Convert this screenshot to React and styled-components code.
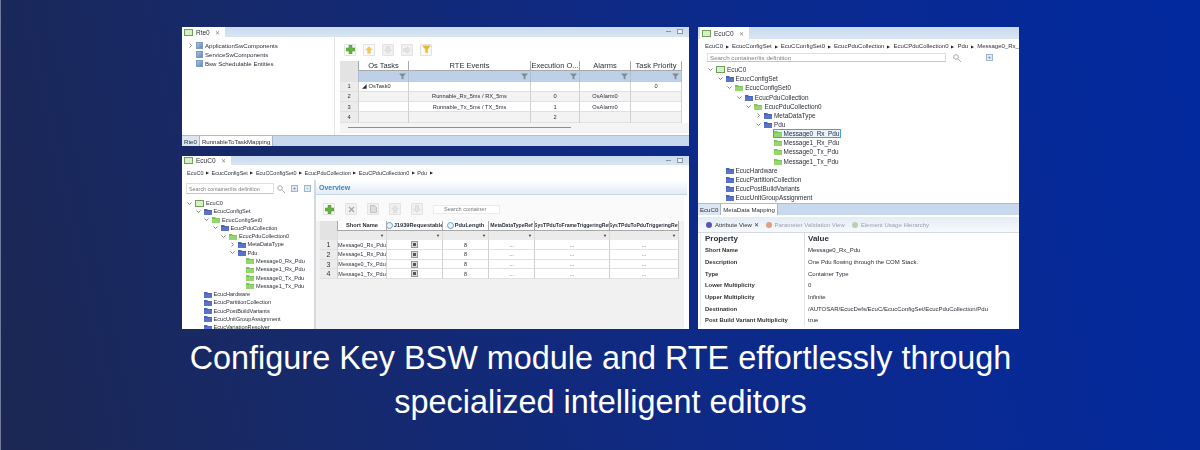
import React from 'react';
import styled, { createGlobalStyle } from 'styled-components';

const GlobalStyle = createGlobalStyle`
  html, body {
    margin: 0;
    padding: 0;
    width: 1200px;
    height: 450px;
    overflow: hidden;
  }
`;

const Page = styled.div`
  width: 1200px;
  height: 450px;
  box-sizing: border-box;
  padding: 27px 181px 0 182px;
  background: linear-gradient(78deg, #1c2752 0%, #172968 22%, #0c2a8c 62%, #02299f 100%);
  box-shadow: inset 1px 0 0 #6f7a9c;
  font-family: 'Liberation Sans', Arial, sans-serif;
`;

const Shots = styled.div`
  display: flex;
  gap: 9px;
  height: 302px;
  color: #2a2f3a;
  font-size: 6.1px;
  filter: blur(0.4px);
`;

const LeftColumn = styled.div`
  display: flex;
  flex-direction: column;
  gap: 10px;
  width: 507px;
`;

const Panel = styled.div`
  display: flex;
  flex-direction: column;
  height: ${(p) => p.$h || 'auto'};
  width: ${(p) => p.$w || 'auto'};
  flex: ${(p) => (p.$h ? 'none' : 1)};
  background: #fff;
  overflow: hidden;
`;

const TabBar = styled.div`
  display: flex;
  height: ${(p) => p.$h || 10}px;
  flex: none;
  background: linear-gradient(#c9dbef, #d8e5f3);
  position: relative;
`;

const Tab = styled.div`
  display: flex;
  align-items: center;
  gap: 3px;
  padding: 0 5px 0 2px;
  margin-left: ${(p) => p.$ml || 0}px;
  background: #fff;
  font-size: 6.5px;
`;

const TabIcon = styled.span`
  width: 7px;
  height: 5px;
  flex: none;
  border: 1px solid #6f9f58;
  background: #d6efc8;
`;

const TabClose = styled.span`
  color: #888;
  font-size: 6px;
  margin-left: 2px;
`;

const WindowButtons = styled.div`
  position: absolute;
  right: 6px;
  top: 2px;
  display: flex;
  gap: 6px;
  align-items: center;
  span:first-child {
    width: 5px;
    height: 1px;
    background: #8b96a5;
  }
  span:last-child {
    width: 4px;
    height: 3px;
    border: 1px solid #8b96a5;
    background: #eef2f7;
  }
`;

const RteBody = styled.div`
  flex: none;
  height: 98px;
  display: flex;
`;

const RteTree = styled.div`
  width: 153px;
  flex: none;
  box-sizing: border-box;
  padding: 4px 0 0 5px;
  border-right: 1px solid #e4e4e4;
`;

const RteRow = styled.div`
  display: flex;
  align-items: center;
  height: 9px;
  gap: 2px;
`;

const ChevronBox = styled.span`
  width: 7px;
  height: 7px;
  flex: none;
  display: flex;
`;

const CompIcon = styled.span`
  width: 7px;
  height: 7px;
  flex: none;
  background: linear-gradient(135deg, #a9c3df, #5f8cba);
  border: 1px solid #7c9bbd;
  box-sizing: border-box;
`;

const RteMain = styled.div`
  flex: 1;
  padding: 6px 6px 0 5px;
  min-width: 0;
`;

const Toolbar = styled.div`
  display: flex;
  align-items: center;
  gap: ${(p) => p.$gap || 7}px;
  height: ${(p) => p.$h || 13}px;
  margin: ${(p) => p.$m || '0 0 5px 4px'};
`;

const ToolButton = styled.div`
  width: 12px;
  height: 12px;
  display: flex;
  align-items: center;
  justify-content: center;
  box-sizing: border-box;
  border: 1px solid #e2e2e2;
  border-radius: 1px;
  background: ${(p) => (p.$active ? '#f9f9f9' : '#f1f1f1')};
`;

const SearchContainer = styled.div`
  width: 67px;
  height: 9px;
  box-sizing: border-box;
  border: 1px solid #ececec;
  background: #fff;
  padding-left: 10px;
  line-height: 7px;
  font-size: 5.6px;
  color: #777;
`;

const Table = styled.div`
  display: grid;
  grid-template-columns: ${(p) => p.$cols};
  grid-auto-rows: ${(p) => p.$row}px;
  width: max-content;
`;

const HeaderCell = styled.div`
  display: flex;
  align-items: center;
  justify-content: center;
  gap: 1px;
  background: ${(p) => (p.$corner ? '#e3e3e3' : '#fff')};
  border-right: 1px solid #a9a9a9;
  border-bottom: ${(p) => (p.$corner ? 'none' : '1px solid #a8a8a8')};
  box-sizing: border-box;
  font-size: ${(p) => p.$fs || 7.5}px;
  font-weight: ${(p) => (p.$bold ? 700 : 400)};
  white-space: nowrap;
  overflow: hidden;
`;

const TypeBadge = styled.span`
  width: 5px;
  height: 5px;
  flex: none;
  border: 1px solid #6f9fc8;
  border-radius: 50%;
  background: #e8f2fb;
`;

const FilterCell = styled.div`
  display: flex;
  align-items: center;
  justify-content: flex-end;
  padding-right: 2px;
  background: ${(p) => (p.$corner ? '#e3e3e3' : p.$grey ? '#ebebeb' : '#bdd0e8')};
  border-right: 1px solid ${(p) => (p.$grey ? '#dcdcdc' : '#aebfd4')};
  box-sizing: border-box;
`;

const FilterMark = styled.span`
  font-size: 4px;
  color: #333;
`;

const Cell = styled.div`
  display: flex;
  align-items: center;
  justify-content: ${(p) => p.$align || 'center'};
  background: ${(p) => (p.$num ? '#ececec' : p.$odd ? '#fff' : '#f3f3f3')};
  border-right: 1px solid #d0d0d0;
  border-bottom: 1px solid #e1e1e1;
  box-sizing: border-box;
  padding-left: ${(p) => (p.$align ? 3 : 0)}px;
  font-size: ${(p) => p.$fs || 5.7}px;
  white-space: nowrap;
  overflow: hidden;
`;

const CheckMark = styled.span`
  width: 5px;
  height: 5px;
  border: 1px solid #9a9a9a;
  background: radial-gradient(#555 45%, #ddd 55%);
`;

const ScrollRow = styled.div`
  height: 10px;
  width: 342px;
  display: flex;
  align-items: center;
  padding-left: 8px;
  background: #f4f4f4;
  &::before {
    content: '';
    width: 223px;
    height: 1px;
    background: #8e8e8e;
  }
`;

const BottomTabs = styled.div`
  display: flex;
  height: 11px;
  flex: none;
  background: #c8d9ed;
  border-top: 1px solid #b5bcc6;
  font-size: 6.1px;
`;

const BottomTab = styled.div`
  display: flex;
  align-items: center;
  padding: 0 2px;
  background: ${(p) => (p.$active ? '#fff' : '#dce6f2')};
  border-right: 1px solid #a9b6c6;
`;

const Crumbs = styled.div`
  display: flex;
  align-items: center;
  flex: none;
  height: ${(p) => p.$h || 15}px;
  gap: ${(p) => p.$gap || 3}px;
  padding-left: ${(p) => p.$pl || 4}px;
  white-space: nowrap;
  overflow: hidden;
  font-size: ${(p) => p.$fs || 6}px;
  i {
    font-style: normal;
    font-size: 4px;
    color: #222;
  }
`;

const EcuBody = styled.div`
  flex: 1;
  min-height: 0;
  display: flex;
`;

const EcuSide = styled.div`
  width: 134px;
  flex: none;
  box-sizing: border-box;
  padding: 3px 0 0 4px;
  border-right: 2px solid #d5d9de;
  overflow: hidden;
`;

const SearchLine = styled.div`
  display: flex;
  align-items: center;
  gap: ${(p) => p.$gap || 3}px;
  height: ${(p) => p.$h || 11}px;
`;

const SearchBox = styled.div`
  width: ${(p) => p.$w}px;
  height: 100%;
  flex: none;
  box-sizing: border-box;
  border: 1px solid #dfdfdf;
  border-bottom-color: #c4c4c4;
  padding-left: 2px;
  display: flex;
  align-items: center;
  white-space: nowrap;
  overflow: hidden;
  color: #808080;
  font-size: ${(p) => p.$fs || 6.2}px;
`;

const ExpandIcon = styled.span`
  width: 7px;
  height: 7px;
  flex: none;
  margin-left: ${(p) => p.$ml || 0}px;
  box-sizing: border-box;
  border: 1px solid #9db6d2;
  background: #dfeaf6;
  color: #4f7fb0;
  font-size: 6px;
  line-height: 5px;
  text-align: center;
`;

const TreeList = styled.div`
  margin-top: ${(p) => p.$mt || 4}px;
`;

const TreeRow = styled.div`
  display: flex;
  align-items: center;
  gap: 2px;
  height: ${(p) => p.$h}px;
  padding-left: ${(p) => p.$depth * p.$step}px;
  font-size: ${(p) => p.$fs}px;
  white-space: nowrap;
`;

const Selected = styled.span`
  display: flex;
  align-items: center;
  gap: 2px;
  ${(p) => p.$on && 'outline: 1px solid #4a9ce0; background: #e8f3fc; padding-right: 1px;'}
`;

const EcuMain = styled.div`
  flex: 1;
  min-width: 0;
  background: #fff;
  display: flex;
  flex-direction: column;
`;

const OverviewBar = styled.div`
  height: 15px;
  flex: none;
  box-sizing: border-box;
  padding-left: 3px;
  line-height: 15px;
  background: linear-gradient(#fff, #e3ebf5);
  border-bottom: 1px solid #c9d6e6;
  color: #3a87c8;
  font-weight: 700;
  font-size: 7px;
  margin-right: 2px;
`;

const OverviewContent = styled.div`
  padding: 8px 0 0 4px;
  flex: 1;
  margin-right: 5px;
  background: linear-gradient(#fafafa 26px, #f1f1f1 26px);
`;

const RightTree = styled.div`
  height: 150px;
  flex: none;
  box-sizing: border-box;
  padding-left: 9px;
  overflow: hidden;
`;

const AttrTabs = styled.div`
  height: 15px;
  flex: none;
  display: flex;
  align-items: center;
  gap: 7px;
  padding-left: 8px;
  background: linear-gradient(#e4ecf6, #f7f9fc);
  border-bottom: 1px solid #d4dbe4;
  font-size: 6px;
  margin-top: 2px;
`;

const AttrTab = styled.span`
  display: flex;
  align-items: center;
  gap: 3px;
  color: ${(p) => (p.$active ? '#333' : '#9aa3ad')};
`;

const Dot = styled.span`
  width: 6px;
  height: 6px;
  border-radius: 50%;
  background: ${(p) => p.$c};
`;

const AttrGrid = styled.div`
  display: grid;
  grid-template-columns: 99px 1fr;
  grid-auto-rows: 11.67px;
  padding: 0 0 0 4px;
  border-left: 1px solid #e6e6e6;
  margin-left: 2px;
  font-size: 6px;
`;

const AttrHead = styled.div`
  display: flex;
  align-items: center;
  font-size: 8px;
  font-weight: 700;
  padding-left: ${(p) => (p.$value ? '3px' : 0)};
  border-left: ${(p) => (p.$value ? '1px solid #dcdcdc' : 'none')};
`;

const AttrName = styled.div`
  display: flex;
  align-items: center;
  font-weight: 700;
  font-size: 5.9px;
  color: #333;
`;

const AttrValue = styled.div`
  display: flex;
  align-items: center;
  padding-left: 3px;
  border-left: 1px solid #e6e6e6;
`;

const Caption = styled.div`
  margin-top: 7px;
  width: 100%;
  text-align: center;
  color: #fff;
  font-size: 32.4px;
  line-height: 44px;
`;

const ArrowSvg = styled.svg`
  transform: rotate(${(p) => p.$rot || 0}deg);
`;

const Folder = ({ green }) => (
  <svg width="8" height="7" viewBox="0 0 8 7">
    <path d="M0 1h3l1 1h4v5H0z" fill={green ? '#7cc653' : '#4a63b8'} />
    <path d="M0 3h8v4H0z" fill={green ? '#95d76e' : '#5a73c8'} />
  </svg>
);

const Chevron = ({ dir }) => (
  <ChevronBox>
    {dir && (
      <svg width="7" height="7" viewBox="0 0 7 7">
        <path
          d={dir === 'down' ? 'M1.5 2.5l2 2 2-2' : 'M2.5 1.5l2 2-2 2'}
          fill="none"
          stroke="#777"
          strokeWidth="0.9"
        />
      </svg>
    )}
  </ChevronBox>
);

const Funnel = ({ color = '#7f8a96', size = 7 }) => (
  <svg width={size} height={size} viewBox="0 0 8 8">
    <path d="M0 0.5h8L5 4v3.5L3 6.5V4z" fill={color} />
  </svg>
);

const Plus = () => (
  <svg width="9" height="9" viewBox="0 0 9 9">
    <path d="M3 0h3v3h3v3H6v3H3V6H0V3h3z" fill="#66b242" stroke="#4a9a2d" strokeWidth="0.5" />
  </svg>
);

const Arrow = ({ color, rot }) => (
  <ArrowSvg $rot={rot} width="8" height="8" viewBox="0 0 8 8">
    <path d="M4 0.5L7.5 4H5.5v3.5h-3V4H0.5z" fill={color} stroke="#c9c9c9" strokeWidth="0.4" />
  </ArrowSvg>
);

const Cross = () => (
  <svg width="7" height="7" viewBox="0 0 7 7">
    <path d="M1 1l5 5M6 1L1 6" stroke="#a9a9a9" strokeWidth="1.4" />
  </svg>
);

const Doc = () => (
  <svg width="7" height="8" viewBox="0 0 7 8">
    <path d="M0.5 0.5h4l2 2v5h-6z" fill="#ddd" stroke="#aaa" strokeWidth="0.6" />
  </svg>
);

const Magnifier = () => (
  <svg width="8" height="8" viewBox="0 0 8 8">
    <circle cx="3" cy="3" r="2.3" fill="none" stroke="#aaa" />
    <path d="M5 5l3 3" stroke="#aaa" />
  </svg>
);

const rteRows = [
  ['1', <>◢ OsTask0</>, '', '', '', '0'],
  ['2', '', 'Runnable_Rx_5ms / RX_5ms', '0', 'OsAlarm0', ''],
  ['3', '', 'Runnable_Tx_5ms / TX_5ms', '1', 'OsAlarm0', ''],
  ['4', '', '', '2', '', ''],
];

const rteHeads = ['', 'Os Tasks', 'RTE Events', 'Execution O...', 'Alarms', 'Task Priority'];

const pduNames = ['Message0_Rx_Pdu', 'Message1_Rx_Pdu', 'Message0_Tx_Pdu', 'Message1_Tx_Pdu'];

const pduHeads = ['', 'Short Name', 'J1939Requestable', 'PduLength', 'MetaDataTypeRef', 'SysTPduToFrameTriggeringRef', 'SysTPduToPduTriggeringRef'];

const treeItems = [
  { t: 'EcuC0', d: 0, c: 'down', icon: 'root' },
  { t: 'EcucConfigSet', d: 1, c: 'down' },
  { t: 'EcucConfigSet0', d: 2, c: 'down', green: true },
  { t: 'EcucPduCollection', d: 3, c: 'down' },
  { t: 'EcucPduCollection0', d: 4, c: 'down', green: true },
  { t: 'MetaDataType', d: 5, c: 'right' },
  { t: 'Pdu', d: 5, c: 'down' },
  { t: 'Message0_Rx_Pdu', d: 6, green: true, selected: true },
  { t: 'Message1_Rx_Pdu', d: 6, green: true },
  { t: 'Message0_Tx_Pdu', d: 6, green: true },
  { t: 'Message1_Tx_Pdu', d: 6, green: true },
];

const lowerLeft = ['EcucHardware', 'EcucPartitionCollection', 'EcucPostBuildVariants', 'EcucUnitGroupAssignment', 'EcucVariationResolver'];
const lowerRight = lowerLeft.slice(0, 4);

const attrs = [
  ['Short Name', 'Message0_Rx_Pdu'],
  ['Description', 'One Pdu flowing through the COM Stack.'],
  ['Type', 'Container Type'],
  ['Lower Multiplicity', '0'],
  ['Upper Multiplicity', 'Infinite'],
  ['Destination', '/AUTOSAR/EcucDefs/EcuC/EcucConfigSet/EcucPduCollection/Pdu'],
  ['Post Build Variant Multiplicity', 'true'],
];

const crumbs = ['EcuC0', 'EcucConfigSet', 'EcuCConfigSet0', 'EcucPduCollection', 'EcuCPduCollection0', 'Pdu'];

const Tree = ({ h, step, fs, mt, showSelected, lower }) => (
  <TreeList $mt={mt}>
    {treeItems.map((item) => (
      <TreeRow key={item.t} $h={h} $step={step} $depth={item.d} $fs={fs}>
        <Chevron dir={item.c} />
        <Selected $on={showSelected && item.selected}>
          {item.icon === 'root' ? <TabIcon /> : <Folder green={item.green} />}
          <span>{item.t}</span>
        </Selected>
      </TreeRow>
    ))}
    {lower.map((t) => (
      <TreeRow key={t} $h={h} $step={step} $depth={1} $fs={fs}>
        <Chevron />
        <Folder />
        <span>{t}</span>
      </TreeRow>
    ))}
  </TreeList>
);

const CrumbTrail = ({ last }) => (
  <>
    {crumbs.map((c) => (
      <React.Fragment key={c}>
        <span>{c}</span>
        <i>▶</i>
      </React.Fragment>
    ))}
    {last && <span>{last}</span>}
  </>
);

const App = () => (
  <Page>
    <GlobalStyle />
    <Shots>
      <LeftColumn>
        <Panel $h="119px">
          <TabBar>
            <Tab>
              <TabIcon />
              Rte0
              <TabClose>✕</TabClose>
            </Tab>
            <WindowButtons>
              <span />
              <span />
            </WindowButtons>
          </TabBar>
          <RteBody>
            <RteTree>
              <RteRow>
                <Chevron dir="right" />
                <CompIcon />
                ApplicationSwComponents
              </RteRow>
              <RteRow>
                <Chevron />
                <CompIcon />
                ServiceSwComponents
              </RteRow>
              <RteRow>
                <Chevron />
                <CompIcon />
                Bsw Schedulable Entities
              </RteRow>
            </RteTree>
            <RteMain>
              <Toolbar>
                <ToolButton $active>
                  <Plus />
                </ToolButton>
                <ToolButton $active>
                  <Arrow color="#f3c94a" />
                </ToolButton>
                <ToolButton>
                  <Arrow color="#e3e3e3" rot={180} />
                </ToolButton>
                <ToolButton>
                  <Arrow color="#e3e3e3" rot={90} />
                </ToolButton>
                <ToolButton $active>
                  <Funnel color="#e8b92c" size={9} />
                </ToolButton>
              </Toolbar>
              <Table $cols="19px 50px 122px 49px 51px 51px" $row={10.25}>
                {rteHeads.map((h, i) => (
                  <HeaderCell key={h + i} $corner={i === 0}>
                    {h}
                  </HeaderCell>
                ))}
                {rteHeads.map((h, i) => (
                  <FilterCell key={h + i} $corner={i === 0}>
                    {i > 0 && <Funnel />}
                  </FilterCell>
                ))}
                {rteRows.map((row, r) =>
                  row.map((v, i) => (
                    <Cell
                      key={`${r}-${i}`}
                      $num={i === 0}
                      $odd={r % 2 === 0}
                      $align={i === 1 ? 'flex-start' : undefined}
                    >
                      {v}
                    </Cell>
                  )),
                )}
              </Table>
              <ScrollRow />
            </RteMain>
          </RteBody>
          <BottomTabs>
            <BottomTab>Rte0</BottomTab>
            <BottomTab $active>RunnableToTaskMapping</BottomTab>
          </BottomTabs>
        </Panel>
        <Panel>
          <TabBar $h={9}>
            <Tab>
              <TabIcon />
              EcuC0
              <TabClose>✕</TabClose>
            </Tab>
            <WindowButtons>
              <span />
              <span />
            </WindowButtons>
          </TabBar>
          <Crumbs $fs={5.5} $gap={2.5} $pl={5}>
            <CrumbTrail />
          </Crumbs>
          <EcuBody>
            <EcuSide>
              <SearchLine>
                <SearchBox $w={88} $fs={5.4}>
                  Search container/its definition
                </SearchBox>
                <Magnifier />
                <ExpandIcon $ml={3}>+</ExpandIcon>
                <ExpandIcon $ml={3}>-</ExpandIcon>
              </SearchLine>
              <Tree h={8.27} step={8.5} fs={5.6} mt={5} lower={lowerLeft} />
            </EcuSide>
            <EcuMain>
              <OverviewBar>Overview</OverviewBar>
              <OverviewContent>
                <Toolbar $gap={10} $h={12} $m="0 0 6px 3px">
                  <ToolButton $active>
                    <Plus />
                  </ToolButton>
                  <ToolButton>
                    <Cross />
                  </ToolButton>
                  <ToolButton>
                    <Doc />
                  </ToolButton>
                  <ToolButton>
                    <Arrow color="#e3e3e3" />
                  </ToolButton>
                  <ToolButton>
                    <Arrow color="#e3e3e3" rot={180} />
                  </ToolButton>
                  <SearchContainer>Search container</SearchContainer>
                </Toolbar>
                <Table $cols="18px 49px 56px 46px 46px 75px 69px" $row={9.7}>
                  {pduHeads.map((h, i) => (
                    <HeaderCell key={h + i} $corner={i === 0} $bold $fs={i > 3 ? 5.1 : 5.7}>
                      {(i === 2 || i === 3) && <TypeBadge />}
                      {h}
                    </HeaderCell>
                  ))}
                  {pduHeads.map((h, i) => (
                    <FilterCell key={h + i} $corner={i === 0} $grey>
                      {i > 0 && <FilterMark>▼</FilterMark>}
                    </FilterCell>
                  ))}
                  {pduNames.map((n, r) =>
                    pduHeads.map((h, i) => (
                      <Cell key={n + i} $num={i === 0} $odd $fs={i === 0 ? 7 : 5.5}>
                        {i === 0 && r + 1}
                        {i === 1 && n}
                        {i === 2 && <CheckMark />}
                        {i === 3 && '8'}
                        {i > 3 && '...'}
                      </Cell>
                    )),
                  )}
                </Table>
              </OverviewContent>
            </EcuMain>
          </EcuBody>
        </Panel>
      </LeftColumn>
      <Panel $w="320px">
        <TabBar $h={12}>
          <Tab $ml={2}>
            <TabIcon />
            EcuC0
            <TabClose>✕</TabClose>
          </Tab>
        </TabBar>
        <Crumbs $h={14} $pl={7} $gap={3}>
          <CrumbTrail last="Message0_Rx_Pdu" />
        </Crumbs>
        <RightTree>
          <SearchLine $h={9} $gap={7}>
            <SearchBox $w={239}>Search container/its definition</SearchBox>
            <Magnifier />
            <ExpandIcon $ml={18}>+</ExpandIcon>
          </SearchLine>
          <Tree h={9.17} step={9.6} fs={6.4} mt={3} showSelected lower={lowerRight} />
        </RightTree>
        <BottomTabs>
          <BottomTab>EcuC0</BottomTab>
          <BottomTab $active>MetaData Mapping</BottomTab>
        </BottomTabs>
        <AttrTabs>
          <AttrTab $active>
            <Dot $c="#5a55b5" />
            Attribute View ✕
          </AttrTab>
          <AttrTab>
            <Dot $c="#e0a080" />
            Parameter Validation View
          </AttrTab>
          <AttrTab>
            <Dot $c="#b8d0b0" />
            Element Usage Hierarchy
          </AttrTab>
        </AttrTabs>
        <AttrGrid>
          <AttrHead>Property</AttrHead>
          <AttrHead $value>Value</AttrHead>
          {attrs.map(([k, v]) => (
            <React.Fragment key={k}>
              <AttrName>{k}</AttrName>
              <AttrValue>{v}</AttrValue>
            </React.Fragment>
          ))}
        </AttrGrid>
      </Panel>
    </Shots>
    <Caption>
      Configure Key BSW module and RTE effortlessly through
      <br />
      specialized intelligent editors
    </Caption>
  </Page>
);

export default App;
